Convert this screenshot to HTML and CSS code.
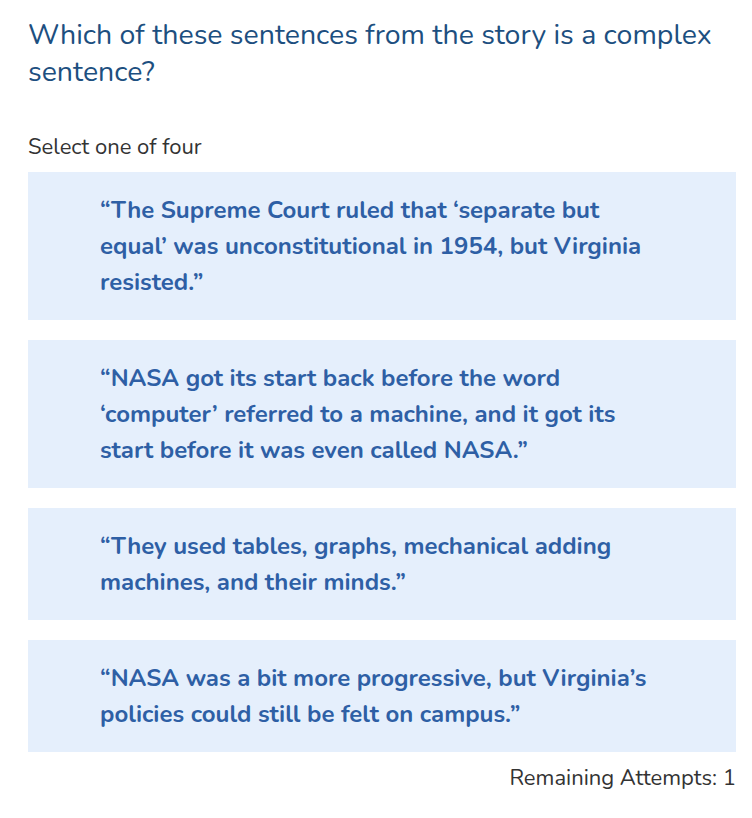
FILE: index.html
```html
<!DOCTYPE html>
<html>
<head>
<meta charset="utf-8">
<link rel="stylesheet" href="styles.css">
</head>
<body>
<div class="page">
  <h1 class="question">Which of these sentences from the story is a complex sentence?</h1>
  <p class="hint">Select one of four</p>
  <div class="options">
    <div class="option">“The Supreme Court ruled that ‘separate but equal’ was unconstitutional in 1954, but Virginia resisted.”</div>
    <div class="option">“NASA got its start back before the word ‘computer’ referred to a machine, and it got its start before it was even called NASA.”</div>
    <div class="option">“They used tables, graphs, mechanical adding machines, and their minds.”</div>
    <div class="option">“NASA was a bit more progressive, but Virginia’s policies could still be felt on campus.”</div>
  </div>
  <p class="attempts">Remaining Attempts: 1</p>
</div>
</body>
</html>
```
FILE: styles.css
```css
html, body {
  margin: 0;
  padding: 0;
  background: #ffffff;
}
.page {
  padding: 16px 16px 0 28px;
  font-family: "Nunito", Lato, "Open Sans", sans-serif;
}
.question {
  margin: 0;
  font-size: 28.5px;
  line-height: 37px;
  font-weight: 400;
  color: #1d4f80;
  width: 700px;
}
.hint {
  margin: 44px 0 0 0;
  font-size: 22px;
  line-height: 26px;
  color: #333333;
}
.options {
  margin-top: 12px;
  display: flex;
  flex-direction: column;
  gap: 20px;
}
.option {
  background: #e5effc;
  padding: 20px 72px;
  font-size: 24px;
  line-height: 36px;
  font-weight: 700;
  color: #2e5fa5;
}
.attempts {
  margin: 13px 0 0 0;
  text-align: right;
  font-size: 22px;
  line-height: 26px;
  color: #333333;
}
```
